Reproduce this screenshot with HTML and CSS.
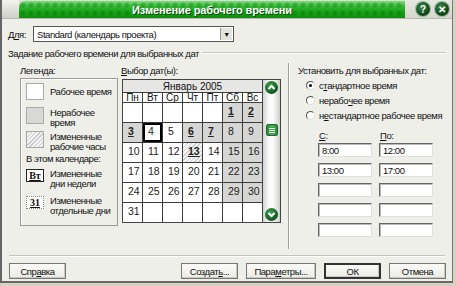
FILE: index.html
```html
<!DOCTYPE html>
<html lang="ru">
<head>
    <meta charset="UTF-8">
    <title>Изменение рабочего времени</title>
    <link rel="stylesheet" href="styles.css">
</head>
<body>

<div class="dialog">
    <div class="titlebar">
        <div class="tb-corner"></div>
        <div class="tb-green"><span class="caption">Изменение рабочего времени</span></div>
        <div class="tb-right">
            <span class="tb-btn">?</span>
            <span class="tb-btn">✕</span>
        </div>
    </div>

    <div class="content">
        <div class="row-for">
            <span class="lbl-for">Д<u>л</u>я:</span>
            <div class="select">
                <span>Standard (календарь проекта)</span>
                <span class="select-arrow">▼</span>
            </div>
        </div>

        <div class="group-title"><span>Задание рабочего времени для выбранных дат</span><i></i></div>

        <div class="columns">
            <!-- легенда -->
            <div class="col-legend">
                <div class="col-label">Легенда:</div>
                <div class="legend-box">
                    <div class="legend-item">
                        <span class="swatch sw-work"></span>
                        <span class="legend-text one">Рабочее время</span>
                    </div>
                    <div class="legend-item">
                        <span class="swatch sw-off"></span>
                        <span class="legend-text">Нерабочее<br>время</span>
                    </div>
                    <div class="legend-item">
                        <span class="swatch sw-hatch"></span>
                        <span class="legend-text">Измененные<br>рабочие часы</span>
                    </div>
                    <div class="legend-sub">В этом календаре:</div>
                    <div class="legend-item small">
                        <span class="swatch sw-day">Вт</span>
                        <span class="legend-text">Измененные<br>дни недели</span>
                    </div>
                    <div class="legend-item small">
                        <span class="swatch sw-date">31</span>
                        <span class="legend-text">Измененные<br>отдельные дни</span>
                    </div>
                </div>
            </div>

            <!-- календарь -->
            <div class="col-cal">
                <div class="col-label"><u>В</u>ыбор дат(ы):</div>
                <div class="cal-frame">
                    <div class="calendar">
                        <div class="cal-month">Январь 2005</div>
                        <div class="cal-grid names">
                            <span>Пн</span><span>Вт</span><span>Ср</span><span>Чт</span><span>Пт</span><span>Сб</span><span>Вс</span>
                        </div>
                        <div class="cal-grid days">
                            <span></span><span></span><span></span><span></span><span></span>
                            <span class="off mark">1</span><span class="off mark">2</span>

                            <span class="off mark">3</span><span class="sel">4</span><span>5</span>
                            <span class="off mark">6</span><span class="off mark">7</span><span class="off">8</span><span class="off">9</span>

                            <span>10</span><span>11</span><span>12</span><span class="hatch mark">13</span>
                            <span>14</span><span class="off">15</span><span class="off">16</span>

                            <span>17</span><span>18</span><span>19</span><span>20</span>
                            <span>21</span><span class="off">22</span><span class="off">23</span>

                            <span>24</span><span>25</span><span>26</span><span>27</span>
                            <span>28</span><span class="off">29</span><span class="off">30</span>

                            <span>31</span><span></span><span></span><span></span>
                            <span></span><span></span><span></span>
                        </div>
                    </div>
                    <div class="scroll">
                        <span class="scroll-btn">
                            <svg width="9" height="9" viewBox="0 0 9 9"><path d="M1.5 6 L4.5 3 L7.5 6" fill="none" stroke="#fff" stroke-width="2"/></svg>
                        </span>
                        <span class="scroll-thumb">
                            <svg width="8" height="7" viewBox="0 0 8 7"><path d="M1 1.5 H7 M1 3.5 H7 M1 5.5 H7" stroke="#e8f5e8" stroke-width="1"/></svg>
                        </span>
                        <span class="scroll-btn">
                            <svg width="9" height="9" viewBox="0 0 9 9"><path d="M1.5 3 L4.5 6 L7.5 3" fill="none" stroke="#fff" stroke-width="2"/></svg>
                        </span>
                    </div>
                </div>
            </div>

            <div class="vsep"></div>

            <!-- установка -->
            <div class="col-set">
                <div class="col-label">Установить для выбранных дат:</div>
                <div class="radios">
                    <div class="radio-row"><span class="radio checked"></span>с<u>т</u>андартное время</div>
                    <div class="radio-row"><span class="radio"></span>нерабо<u>ч</u>ее время</div>
                    <div class="radio-row"><span class="radio"></span>н<u>е</u>стандартное рабочее время</div>
                </div>
                <div class="time-heads">
                    <span><u>С</u>:</span><span><u>П</u>о:</span>
                </div>
                <div class="times">
                    <span class="field">8:00</span><span class="field">12:00</span>
                    <span class="field">13:00</span><span class="field">17:00</span>
                    <span class="field"></span><span class="field"></span>
                    <span class="field"></span><span class="field"></span>
                    <span class="field"></span><span class="field"></span>
                </div>
            </div>
        </div>

        <div class="hsep"></div>

        <div class="buttons">
            <button class="btn">Спр<u>а</u>вка</button>
            <button class="btn push">Создат<u>ь</u>...</button>
            <button class="btn wide">Пара<u>м</u>етры...</button>
            <button class="btn default">ОК</button>
            <button class="btn">Отмена</button>
        </div>
    </div>
</div>

</body>
</html>
```

FILE: styles.css
```css
/* Окно диалога */
body {
    margin: 0;
    background: #d5d2bd;
    font-family: "Liberation Sans", Arial, sans-serif;
    font-size: 9.5px;
    letter-spacing: -0.45px;
    color: #111;
}
u {
    text-decoration: underline;
    text-underline-offset: 1px;
}
.dialog {
    width: 453px;
    height: 283px;
    box-sizing: border-box;
    background: #efefea;
    border-left: 2px solid #666;
    border-right: 1px solid #777;
    border-bottom: 2px solid #666;
    display: flex;
    flex-direction: column;
}

/* Заголовок */
.titlebar {
    height: 18px;
    display: flex;
    background: #dcdcd4;
    border-bottom: 1px solid #b8b8b0;
}
.tb-corner {
    width: 17px;
    background: linear-gradient(#f4f4f0, #cfcfc8);
}
.tb-green {
    width: 386px;
    margin-top: 1px;
    border-radius: 6px 0 0 0;
    background:
        radial-gradient(circle at 4px 4px, rgba(0, 90, 0, 0.25) 2px, transparent 3px) 0 0 / 8px 8px,
        linear-gradient(#7ddf7d, #2eb52e 35%, #15a015 70%, #0f8f0f);
    display: flex;
    justify-content: center;
    align-items: center;
}
.caption {
    color: #fff;
    font-weight: bold;
    font-size: 11px;
    letter-spacing: -0.1px;
    text-shadow: 1px 1px 0 #0a4a0a;
}
.tb-right {
    flex: 1;
    display: flex;
    align-items: center;
    justify-content: flex-end;
    gap: 5px;
    padding-right: 3px;
    background: linear-gradient(#e8e8e2, #d6d6ce);
}
.tb-btn {
    width: 14px;
    height: 14px;
    border-radius: 50%;
    background: radial-gradient(circle at 40% 35%, #3d8a4a, #0b3f14 70%);
    box-shadow: 0 0 0 1px #8fb89a;
    color: #fff;
    font-weight: bold;
    font-size: 10px;
    letter-spacing: 0;
    display: flex;
    align-items: center;
    justify-content: center;
}

/* Содержимое */
.content {
    flex: 1;
    padding: 7px 6px 0 6px;
    display: flex;
    flex-direction: column;
}
.row-for {
    display: flex;
    align-items: center;
    height: 16px;
}
.lbl-for {
    width: 25px;
}
.select {
    width: 201px;
    height: 16px;
    box-sizing: border-box;
    border: 1px solid #555;
    background: #fff;
    display: flex;
    align-items: center;
    justify-content: space-between;
    padding-left: 3px;
}
.select-arrow {
    width: 11px;
    height: 12px;
    margin-right: 1px;
    background: #e4e4de;
    border-left: 1px solid #999;
    font-size: 7px;
    display: flex;
    align-items: center;
    justify-content: center;
}
.group-title {
    display: flex;
    align-items: center;
    margin-top: 5px;
    height: 12px;
}
.group-title i {
    flex: 1;
    margin-left: 3px;
    border-top: 1px solid #c4c4bc;
    border-bottom: 1px solid #fff;
}

.columns {
    display: flex;
    height: 186px;
    margin-top: 6px;
}
.col-label {
    height: 12px;
    line-height: 12px;
}

/* Легенда */
.col-legend {
    width: 113px;
    padding-left: 12px;
    box-sizing: border-box;
}
.legend-box {
    width: 98px;
    height: 148px;
    box-sizing: border-box;
    margin-top: 1px;
    border: 1px solid #999;
    box-shadow: inset 1px 1px 0 #fff;
    padding: 4px 0 0 5px;
}
.legend-item {
    display: flex;
    gap: 6px;
    height: 24px;
}
.legend-item.small {
    height: 27px;
}
.legend-text {
    line-height: 9.5px;
    padding-top: 1px;
    white-space: nowrap;
}
.legend-text.one {
    padding-top: 4px;
}
.swatch {
    width: 18px;
    height: 17px;
    box-sizing: border-box;
    border: 1px solid #aaa;
    flex: none;
}
.sw-work { background: #fff; }
.sw-off { background: #d8d8d6; }
.sw-hatch {
    background: repeating-linear-gradient(135deg, #c8c8c8 0 1px, #f4f4f4 1px 3px);
}
.sw-day,
.sw-date {
    height: 13px;
    margin-top: 1px;
    font-family: "Liberation Serif", serif;
    font-weight: bold;
    font-size: 10px;
    letter-spacing: 0;
    text-decoration: underline;
    display: flex;
    align-items: center;
    justify-content: center;
    background: #fff;
}
.sw-day { border: 1px solid #222; }
.sw-date { border: 1px dotted #888; }
.legend-sub {
    height: 14px;
    line-height: 10px;
    margin-top: -1px;
}

/* Календарь */
.col-cal {
    width: 167px;
}
.cal-frame {
    width: 159px;
    height: 144px;
    box-sizing: border-box;
    margin-top: 2px;
    margin-left: 1px;
    border: 1px solid #444;
    display: flex;
    background: #fff;
}
.calendar {
    width: 139px;
    border-right: 1px solid #444;
    font-size: 10px;
    letter-spacing: 0;
}
.cal-month {
    height: 12px;
    line-height: 13px;
    text-align: center;
    background: #e6e6e4;
}
.cal-grid {
    display: grid;
    grid-template-columns: repeat(7, 1fr);
    gap: 1px;
    background: #3c3c3c;
    border-top: 1px solid #3c3c3c;
}
.cal-grid span {
    background: #fff;
}
.names span {
    height: 9px;
    line-height: 10px;
    text-align: center;
}
.days span {
    height: 19px;
    padding: 2px 0 0 5px;
    box-sizing: border-box;
    font-size: 10.5px;
    color: #222;
}
.days span.off { background: #d6d6d4; }
.days span.hatch {
    background: repeating-linear-gradient(135deg, #cfcfcf 0 1px, #f6f6f6 1px 3px);
}
.days span.mark {
    font-weight: bold;
    text-decoration: underline;
}
.days span.sel {
    box-shadow: inset 0 0 0 2px #000;
}

.scroll {
    flex: 1;
    background: linear-gradient(to right, #d2d2d0, #fbfbfb 35%, #fbfbfb 60%, #cdcdca);
    display: flex;
    flex-direction: column;
    align-items: center;
    justify-content: space-between;
    padding: 1px 0;
}
.scroll-btn {
    width: 13px;
    height: 13px;
    border-radius: 50%;
    background: radial-gradient(circle at 40% 35%, #3fa34f, #0b5018 75%);
    display: flex;
    align-items: center;
    justify-content: center;
}
.scroll-thumb {
    width: 12px;
    height: 12px;
    margin-top: -42px;
    border-radius: 2px;
    background: linear-gradient(to right, #2f8a3c, #4cae5a, #2f8a3c);
    border: 1px solid #1f6a2b;
    box-sizing: border-box;
    display: flex;
    align-items: center;
    justify-content: center;
}

.vsep {
    width: 1px;
    height: 186px;
    margin-top: -2px;
    background: #a0a09a;
    border-right: 1px solid #fff;
}

/* Установка времени */
.col-set {
    flex: 1;
    padding-left: 8px;
}
.radios {
    margin-top: 1px;
}
.radio-row {
    height: 15px;
    display: flex;
    align-items: center;
    padding-left: 8px;
    white-space: nowrap;
}
.radio {
    width: 7px;
    height: 7px;
    border: 1px solid #777;
    border-color: #555 #ddd #ddd #555;
    border-radius: 50%;
    margin-right: 4px;
    background: #fff;
    position: relative;
}
.radio.checked::after {
    content: "";
    position: absolute;
    left: 2px;
    top: 2px;
    width: 3px;
    height: 3px;
    border-radius: 50%;
    background: #000;
}
.time-heads,
.times {
    display: grid;
    grid-template-columns: 54px 54px;
    column-gap: 7px;
    margin-left: 20px;
}
.time-heads {
    height: 10px;
    line-height: 10px;
    margin-top: 8px;
    padding-left: 1px;
}
.times {
    grid-auto-rows: 14px;
    row-gap: 6px;
    margin-top: 2px;
}
.field {
    background: #fff;
    border: 1px solid;
    border-color: #666 #e0e0e0 #e0e0e0 #666;
    box-shadow: inset 1px 1px 0 #bbb;
    padding-left: 3px;
    line-height: 13px;
}

/* Кнопки */
.hsep {
    height: 0;
    margin: 4px 1px 0 1px;
    border-top: 1px solid #c4c4bc;
    border-bottom: 1px solid #fff;
}
.buttons {
    display: flex;
    gap: 8px;
    margin-top: 6px;
    padding-left: 1px;
}
.btn {
    width: 57px;
    height: 16px;
    padding: 0;
    font: inherit;
    letter-spacing: inherit;
    color: #111;
    background: linear-gradient(#fafaf8, #ececE6);
    border: 1px solid #777;
    box-shadow: inset -1px -1px 0 #c8c8c0;
}
.btn.push {
    margin-left: auto;
}
.btn.wide {
    width: 70px;
}
.btn.default {
    border: 2px solid #333;
}
```
